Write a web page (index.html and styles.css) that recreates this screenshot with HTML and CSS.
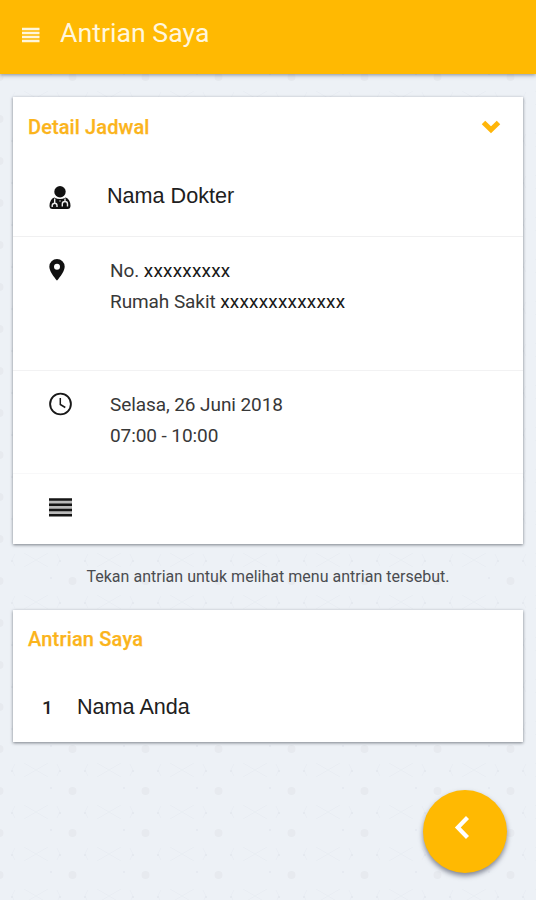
FILE: index.html
```html
<!DOCTYPE html>
<html lang="id">
<head>
<meta charset="utf-8">
<title>Antrian Saya</title>
<link rel="stylesheet" href="styles.css">
</head>
<body>
<div class="app">
  <svg class="backdrop" width="536" height="900" aria-hidden="true">
    <defs>
      <pattern id="motif" x="36" y="14" width="73" height="42" patternUnits="userSpaceOnUse">
        <g class="motif-lines">
          <path d="M0 0L12 7M73 0L61 7M0 42L12 35M73 42L61 35M24 0L21 6M49 0L52 6M24 42L21 36M49 42L52 36"/>
        </g>
        <circle class="motif-dot" cx="36.500" cy="21" r="4"/>
        <circle class="motif-speck" cx="24" cy="1" r="1.200"/>
        <circle class="motif-speck" cx="49" cy="1" r="1.200"/>
        <circle class="motif-speck" cx="15" cy="18" r="1"/>
      </pattern>
    </defs>
    <rect width="536" height="900" fill="url(#motif)"/>
  </svg>

  <header class="bar">
    <svg class="menu-icon" width="18" height="16" viewBox="0 0 18 16"><path d="M0 2H17.500M0 6H17.500M0 10H17.500M0 14H17.500"/></svg>
    <h1 class="bar-title">Antrian Saya</h1>
  </header>

  <main class="content">
    <section class="card">
      <div class="card-head">
        <h2 class="card-title detail-title">Detail Jadwal</h2>
        <svg class="chevron" width="20" height="14" viewBox="0 0 20 14"><path d="M2.500 2.500L10 9.800L17.500 2.500"/></svg>
      </div>
      <div class="row doctor">
        <svg class="icon doctor-icon" width="22" height="24" viewBox="0 0 22 24">
          <circle cx="11" cy="5.800" r="5.700"/>
          <path d="M5.300 11.500Q1 13 .5 19.500Q.4 23 3.500 23H18.500Q21.600 23 21.500 19.500Q21 13 16.700 11.500Q11 14.500 5.300 11.500Z"/>
          <path class="cut" d="M5.700 12.500V17.500M3.200 21V19.500Q3.500 17.300 5.700 17.300Q8 17.300 8 19.500V21M16 12.500V15.500M13.300 20.500V18Q13.300 15.500 16 15.500Q18.500 15.500 18.500 18V20.500M11 14.500V15.500"/>
        </svg>
        <p class="name">Nama Dokter</p>
      </div>
      <div class="row place">
        <svg class="icon pin-icon" width="16" height="22" viewBox="0 0 16 22"><path fill-rule="evenodd" d="M8 0A7.700 7.700 0 0 0 .3 7.700C.3 13 8 21.500 8 21.500S15.700 13 15.700 7.700A7.700 7.700 0 0 0 8 0ZM8 4.800A3 3 0 1 1 8 10.800A3 3 0 0 1 8 4.800Z"/></svg>
        <div class="lines">
          <p>No. <span class="mask">xxxxxxxxx</span></p>
          <p class="hospital">Rumah Sakit <span class="mask">xxxxxxxxxxxxx</span></p>
        </div>
      </div>
      <div class="row time">
        <svg class="icon clock-icon" width="24" height="24" viewBox="0 0 24 24"><circle cx="11.500" cy="12" r="10.400"/><path d="M11.300 6V12.500L16.300 15.500"/></svg>
        <div class="lines">
          <p class="date">Selasa, 26 Juni 2018</p>
          <p class="hours">07:00 - 10:00</p>
        </div>
      </div>
      <div class="row note">
        <svg class="icon list-icon" width="23" height="19" viewBox="0 0 23 19"><path class="list-fill" d="M0 1H23V18H0Z"/><path d="M0 1.500H23M0 6.800H23M0 12H23M0 17.200H23"/></svg>
      </div>
    </section>

    <p class="hint">Tekan antrian untuk melihat menu antrian tersebut.</p>

    <section class="card queue">
      <h2 class="card-title queue-title">Antrian Saya</h2>
      <div class="entry">
        <span class="number">1</span>
        <span class="person">Nama Anda</span>
      </div>
    </section>
  </main>

  <button class="fab" aria-label="Kembali">
    <svg width="16" height="24" viewBox="0 0 16 24"><path d="M13.500 1.500L3.800 11.500L13.500 21.500"/></svg>
  </button>
</div>
</body>
</html>
```
FILE: styles.css
```css
* { box-sizing: border-box; }

body {
  margin: 0;
  background: #fff;
  font-family: Roboto, "Liberation Sans", sans-serif;
  color: #212121;
}

h1, h2, p { margin: 0; }
svg { display: block; flex: none; }

.app {
  position: relative;
  width: 536px;
  height: 900px;
  overflow: hidden;
  background: #edf1f6;
}

.backdrop { position: absolute; inset: 0; }
.motif-lines { fill: none; stroke: #e9edf3; stroke-width: 1; }
.motif-dot { fill: #e7eaef; }
.motif-speck { fill: #e5e9ef; }

.bar {
  position: relative;
  display: flex;
  align-items: flex-start;
  height: 74px;
  padding: 17px 0 0 22px;
  background: #ffb902;
  box-shadow: 0 1px 4px rgba(60, 70, 90, .6);
}
.menu-icon { margin-top: 10px; stroke: #fff6dc; stroke-width: 2.4; }
.bar-title {
  margin-left: 20px;
  font-size: 26.7px;
  line-height: 32px;
  font-weight: 400;
  color: #fff6dd;
  white-space: nowrap;
}

.content { position: relative; padding: 23px 13px 0; }

.card {
  height: 447px;
  background: #fff;
  box-shadow: 0 1px 3px rgba(60, 65, 75, .65);
}
.card-head {
  display: flex;
  justify-content: space-between;
  height: 66px;
  padding: 18px 22px 0 15px;
}
.card-title {
  font-size: 20px;
  line-height: 24px;
  font-weight: 500;
  letter-spacing: .1px;
  color: #fbb41c;
  -webkit-text-stroke: .25px #fbb41c;
}
.queue-title { letter-spacing: .17px; }
.chevron { margin-top: 5px; fill: none; stroke: #ffb60a; stroke-width: 5; }

.row { display: flex; align-items: flex-start; padding-left: 36px; }
.doctor { height: 74px; border-bottom: 1px solid #f0f0f1; }
.place { height: 134px; border-bottom: 1px solid #f2f2f3; }
.time { height: 103px; border-bottom: 1px solid #f8f8f9; }
.note { height: 70px; }

.icon { fill: #111; }
.doctor-icon { margin-top: 23px; }
.cut { fill: none; stroke: #eee; stroke-width: 1.4; }
.name {
  margin: 20px 0 0 36px;
  font: 21.6px/26px "Liberation Sans", sans-serif;
  color: #202020;
}
.pin-icon { margin-top: 22px; }
.lines {
  margin-top: 18px;
  font-size: 19px;
  line-height: 31px;
  letter-spacing: -.08px;
  color: #383838;
  white-space: nowrap;
}
.place .lines { margin-left: 45px; }
.time .lines { margin-left: 37px; }
.mask { color: #181818; letter-spacing: .2px; }
.clock-icon { margin-top: 21px; fill: none; stroke: #181818; stroke-width: 1.9; }
.clock-icon path { stroke-width: 1.5; }
.list-icon { margin-top: 24px; stroke: #151515; stroke-width: 2.6; }
.list-fill { fill: #bbb; stroke: none; }

.hint {
  margin-top: 22px;
  font-size: 16px;
  line-height: 22px;
  letter-spacing: .02px;
  text-align: center;
  color: #4a4c50;
  white-space: nowrap;
}

.queue { height: 132px; margin-top: 22px; padding: 17px 15px 0; }
.entry { display: flex; align-items: baseline; margin-top: 43px; padding-left: 14px; }
.number { width: 35px; font-size: 19px; line-height: 26px; font-weight: 500; color: #222; }
.person { font: 21.6px/26px "Liberation Sans", sans-serif; color: #202020; }

.fab {
  position: absolute;
  left: 423px;
  top: 790px;
  display: flex;
  align-items: flex-start;
  width: 84px;
  height: 83px;
  padding: 26px 0 0 31px;
  border: 0;
  border-radius: 50%;
  background: #ffb902;
  box-shadow: 0 3px 5px rgba(60, 65, 85, .6);
}
.fab path { fill: none; stroke: #fff; stroke-width: 4.2; }
```
